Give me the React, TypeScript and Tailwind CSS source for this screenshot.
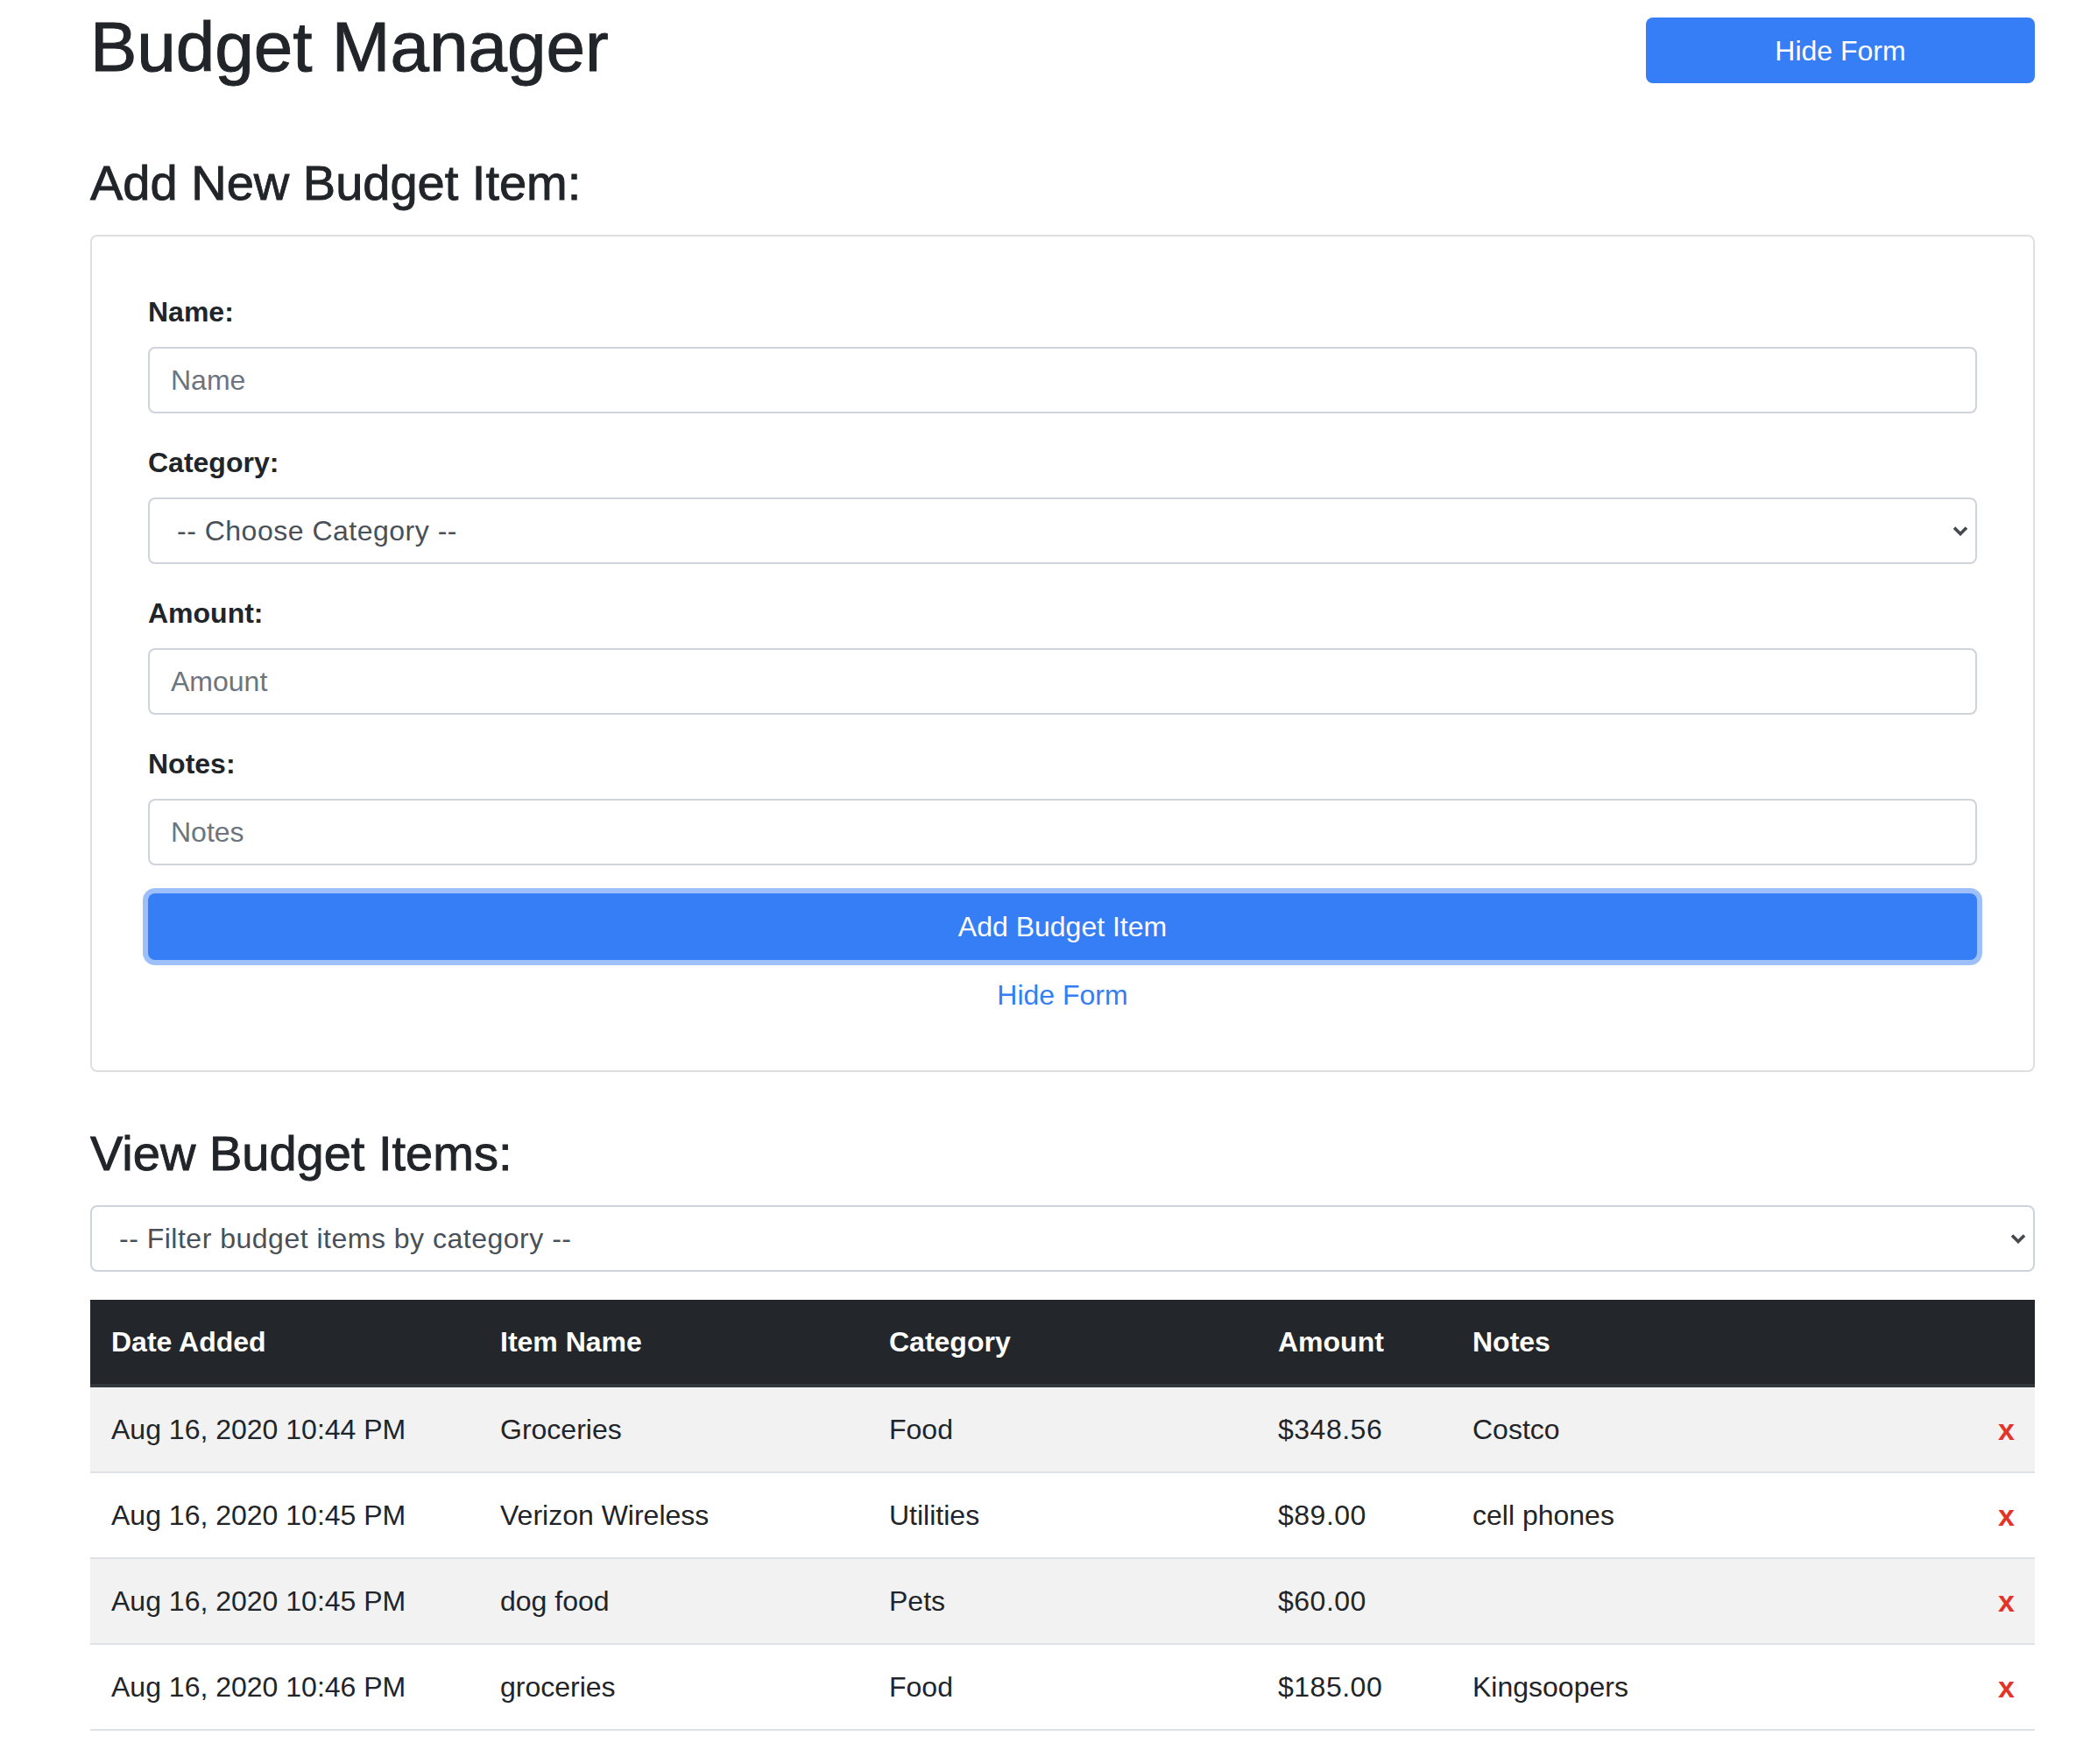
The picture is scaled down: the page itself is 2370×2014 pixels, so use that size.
import React from "react";

type Item = {
    date: string;
    name: string;
    category: string;
    amount: string;
    notes: string;
};

const items: Item[] = [
    { date: "Aug 16, 2020 10:44 PM", name: "Groceries", category: "Food", amount: "$348.56", notes: "Costco" },
    { date: "Aug 16, 2020 10:45 PM", name: "Verizon Wireless", category: "Utilities", amount: "$89.00", notes: "cell phones" },
    { date: "Aug 16, 2020 10:45 PM", name: "dog food", category: "Pets", amount: "$60.00", notes: "" },
    { date: "Aug 16, 2020 10:46 PM", name: "groceries", category: "Food", amount: "$185.00", notes: "Kingsoopers" },
];

const Chevron = () => (
    <svg
        className="absolute right-[10px] top-1/2 -translate-y-1/2 pointer-events-none"
        width="18"
        height="12"
        viewBox="0 0 18 12"
        fill="none"
    >
        <polyline points="2,2.5 9,9.5 16,2.5" stroke="#45494e" strokeWidth="3.6" strokeLinecap="butt" strokeLinejoin="miter" />
    </svg>
);

const Field = ({ label, placeholder }: { label: string; placeholder: string }) => (
    <div className="mb-[32px]">
        <label className="block font-bold text-[32px] leading-[48px] mb-[16px]">{label}</label>
        <input
            placeholder={placeholder}
            className="block w-full h-[76px] border-2 border-[#ced4da] rounded-[8px] px-[24px] text-[32px] text-[#495057] bg-white placeholder:text-[#6c757d] outline-none"
        />
    </div>
);

export default function App() {
    return (
        <div className="min-h-screen bg-white text-[#212529]" style={{ fontFamily: '"Liberation Sans", Arial, sans-serif' }}>
            <div className="w-[2220px] ml-[103px]">

                {/* Header */}
                <div className="flex justify-between items-start">
                    <h1 className="text-[80px] leading-[96px] font-medium mt-[6px] [-webkit-text-stroke:1px_#212529]">Budget Manager</h1>
                    <button className="mt-[20px] w-[444px] h-[75px] rounded-[8px] bg-[#357ef6] text-white text-[32px] flex items-center justify-center">
                        Hide Form
                    </button>
                </div>

                {/* Add form */}
                <h3 className="text-[56px] leading-[67px] font-medium mt-[73px] mb-[26px] [-webkit-text-stroke:0.9px_#212529]">Add New Budget Item:</h3>
                <div className="border-2 border-[#dfdfdf] rounded-[8px] px-[64px] py-[62px]">
                    <Field label="Name:" placeholder="Name" />

                    <div className="mb-[32px]">
                        <label className="block font-bold text-[32px] leading-[48px] mb-[16px]">Category:</label>
                        <div className="relative">
                            <select className="appearance-none block w-full h-[76px] border-2 border-[#ced4da] rounded-[8px] pl-[31px] text-[32px] tracking-[0.5px] text-[#495057] bg-white outline-none">
                                <option>-- Choose Category --</option>
                                <option>Food</option>
                                <option>Utilities</option>
                                <option>Pets</option>
                            </select>
                            <Chevron />
                        </div>
                    </div>

                    <Field label="Amount:" placeholder="Amount" />
                    <Field label="Notes:" placeholder="Notes" />

                    <button className="block w-full h-[76px] rounded-[8px] bg-[#357ef6] text-white text-[32px] shadow-[0_0_0_6px_#9dc0fa]">
                        Add Budget Item
                    </button>
                    <div className="mt-[16px] text-center text-[32px] leading-[48px] text-[#357df5]">Hide Form</div>
                </div>

                {/* List */}
                <h3 className="text-[56px] leading-[67px] font-medium mt-[59px] mb-[26px] [-webkit-text-stroke:0.9px_#212529]">View Budget Items:</h3>
                <div className="relative mb-[32px]">
                    <select className="appearance-none block w-full h-[76px] border-2 border-[#ced4da] rounded-[8px] pl-[31px] text-[32px] tracking-[0.5px] text-[#495057] bg-white outline-none">
                        <option>-- Filter budget items by category --</option>
                        <option>Food</option>
                        <option>Utilities</option>
                        <option>Pets</option>
                    </select>
                    <Chevron />
                </div>

                <table className="w-full table-fixed border-collapse text-[32px] leading-[48px]">
                    <thead>
                        <tr className="bg-[#23272b] text-white">
                            <th className="w-[444px] text-left font-bold p-[24px] border-b-4 border-[#33383d]">Date Added</th>
                            <th className="w-[444px] text-left font-bold p-[24px] border-b-4 border-[#33383d]">Item Name</th>
                            <th className="w-[444px] text-left font-bold p-[24px] border-b-4 border-[#33383d]">Category</th>
                            <th className="w-[222px] text-left font-bold p-[24px] border-b-4 border-[#33383d]">Amount</th>
                            <th className="w-[600px] text-left font-bold p-[24px] border-b-4 border-[#33383d]">Notes</th>
                            <th className="w-[66px] p-[24px] border-b-4 border-[#33383d]"></th>
                        </tr>
                    </thead>
                    <tbody>
                        {items.map((item, i) => (
                            <tr key={i} className={(i % 2 === 0 ? "bg-[#f2f2f2] " : "bg-white ") + "border-b-2 border-[#dee2e6]"}>
                                <td className="p-[24px] whitespace-nowrap">{item.date}</td>
                                <td className="p-[24px] whitespace-nowrap">{item.name}</td>
                                <td className="p-[24px] whitespace-nowrap">{item.category}</td>
                                <td className="p-[24px] whitespace-nowrap tracking-[0.5px]">{item.amount}</td>
                                <td className="p-[24px] whitespace-nowrap">{item.notes}</td>
                                <td className="p-[24px] text-right font-bold text-[34px] text-[#e3342a]">x</td>
                            </tr>
                        ))}
                    </tbody>
                </table>
            </div>
        </div>
    );
}
